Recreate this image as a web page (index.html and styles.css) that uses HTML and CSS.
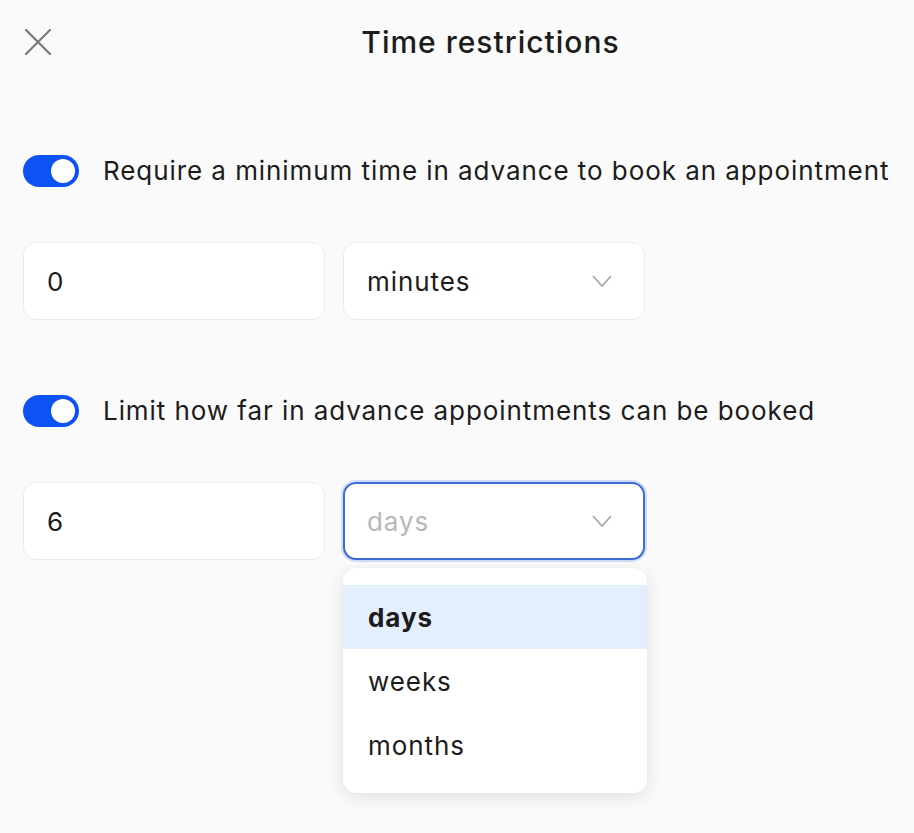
FILE: index.html
```html
<!DOCTYPE html>
<html lang="en">
<head>
<meta charset="utf-8">
<title>Time restrictions</title>
<link rel="stylesheet" href="styles.css">
</head>
<body>
<div class="page">
  <header class="header">
    <button class="close" aria-label="Close">
      <svg width="26" height="26" viewBox="0 0 26 26"><path d="M1 1 L25 25 M25 1 L1 25" stroke="#7a7a7a" stroke-width="2.2" stroke-linecap="round" fill="none"/></svg>
    </button>
    <h1 class="title">Time restrictions</h1>
  </header>

  <section class="section first">
    <div class="toggle-row">
      <span class="toggle"><span class="knob"></span></span>
      <span class="label">Require a minimum time in advance to book an appointment</span>
    </div>
    <div class="fields">
      <div class="field">0</div>
      <div class="field select">
        <span>minutes</span>
        <svg class="chev" width="20" height="12" viewBox="0 0 20 12"><path d="M1 1 L10 11 L19 1" stroke="#a3a3a3" stroke-width="1.6" fill="none"/></svg>
      </div>
    </div>
  </section>

  <section class="section second">
    <div class="toggle-row">
      <span class="toggle"><span class="knob"></span></span>
      <span class="label">Limit how far in advance appointments can be booked</span>
    </div>
    <div class="fields">
      <div class="field">6</div>
      <div class="field select focused">
        <span class="placeholder">days</span>
        <svg class="chev" width="20" height="12" viewBox="0 0 20 12"><path d="M1 1 L10 11 L19 1" stroke="#a3a3a3" stroke-width="1.6" fill="none"/></svg>
        <ul class="menu">
          <li class="item active">days</li>
          <li class="item">weeks</li>
          <li class="item">months</li>
        </ul>
      </div>
    </div>
  </section>
</div>
</body>
</html>
```
FILE: styles.css
```css
* { box-sizing: border-box; }
html, body { margin: 0; padding: 0; }
body {
  background: #fafafa;
  font-family: Inter, "Liberation Sans", sans-serif;
  color: #1c1c1c;
  width: 914px;
  height: 833px;
  overflow: hidden;
  letter-spacing: 0.93px;
}
.page { padding: 0 0 0 23px; }
.header {
  height: 84px;
  display: flex;
  align-items: center;
}
.close {
  border: 0;
  background: none;
  padding: 0;
  margin: 0 0 0 2px;
  width: 26px;
  height: 26px;
  display: flex;
}
.title {
  flex: 1;
  margin: 0;
  text-align: center;
  font-size: 30px;
  font-weight: 500;
  padding-left: 16px;
  letter-spacing: 1px;
  color: #1c1c1c;
}
.section.first { margin-top: 71px; }
.section.second { margin-top: 75px; }
.toggle-row {
  display: flex;
  align-items: center;
  height: 32px;
  gap: 24px;
}
.toggle {
  width: 56px;
  height: 32px;
  border-radius: 16px;
  background: #0d52f3;
  position: relative;
  flex: none;
}
.knob {
  position: absolute;
  right: 4px;
  top: 4px;
  width: 24px;
  height: 24px;
  border-radius: 50%;
  background: #fff;
}
.label {
  font-size: 26px;
  line-height: 32px;
  white-space: nowrap;
}
.fields {
  display: flex;
  gap: 18px;
  margin-top: 55px;
}
.field {
  width: 302px;
  height: 78px;
  background: #fff;
  border: 1px solid #ebebeb;
  border-radius: 13px;
  font-size: 26px;
  display: flex;
  align-items: center;
  padding-left: 23px;
  position: relative;
}
.select { justify-content: space-between; padding-right: 32px; }
.select.focused {
  border: 2px solid #3d6bd3;
  box-shadow: 0 0 0 2px #cfdcf7;
  padding-left: 22px;
  padding-right: 31px;
}
.placeholder { color: #b8b8b8; }
.menu {
  position: absolute;
  list-style: none;
  margin: 0;
  top: calc(100% + 10px);
  left: -2px;
  width: 304px;
  background: #fff;
  border-radius: 13px;
  box-shadow: 0 4px 18px rgba(0,0,0,0.10), 0 0 1px rgba(0,0,0,0.08);
  padding: 17px 0 16px;
}
.item {
  height: 64px;
  display: flex;
  align-items: center;
  padding-left: 25px;
  font-size: 26px;
  color: #1c1c1c;
}
.item.active {
  background: #e4effd;
  font-weight: 700;
}
```
